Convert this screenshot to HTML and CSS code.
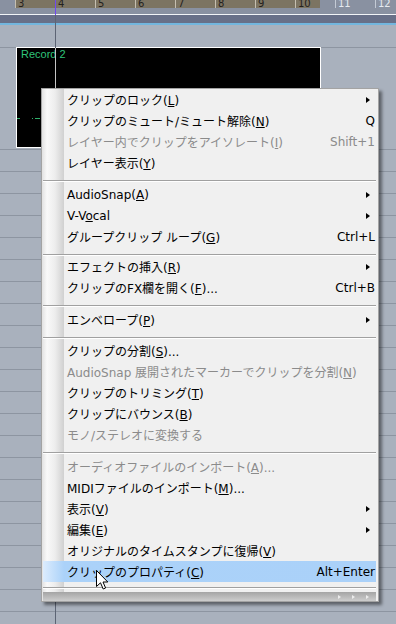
FILE: index.html
```html
<!DOCTYPE html>
<html lang="ja">
<head>
<meta charset="utf-8">
<title>Clip menu</title>
<link rel="stylesheet" href="styles.css">
</head>
<body>
<div class="ruler">
  <div class="tick">3</div><div class="tick">4</div><div class="tick">5</div><div class="tick">6</div>
  <div class="tick">7</div><div class="tick">8</div><div class="tick">9</div><div class="tick">10</div>
  <div class="tick out">11</div><div class="tick out last">12</div>
</div>
<div class="band-grey"></div>
<div class="band-white"></div>
<div class="band-slate"></div>
<div class="band-blue"></div>
<div class="lane-head"></div>
<div class="lane-clip">
  <div class="clip">
    <div class="clip-name">Record 2</div>
    <div class="wave"><span class="d1"></span><span class="d2"></span><span class="d3"></span></div>
  </div>
</div>
<div class="lanes"></div>
<div class="nowline"></div>

<div class="menu">
  <div class="item"><span class="lbl">クリップのロック(<u>L</u>)</span><span class="sub"></span></div>
  <div class="item"><span class="lbl">クリップのミュート/ミュート解除(<u>N</u>)</span><span class="key">Q</span></div>
  <div class="item dis"><span class="lbl">レイヤー内でクリップをアイソレート(<u>I</u>)</span><span class="key">Shift+1</span></div>
  <div class="item"><span class="lbl">レイヤー表示(<u>Y</u>)</span></div>
  <div class="sep"></div>
  <div class="item"><span class="lbl">AudioSnap(<u>A</u>)</span><span class="sub"></span></div>
  <div class="item"><span class="lbl">V-V<u>o</u>cal</span><span class="sub"></span></div>
  <div class="item"><span class="lbl">グループクリップ ループ(<u>G</u>)</span><span class="key">Ctrl+L</span></div>
  <div class="sep s9"></div>
  <div class="item"><span class="lbl">エフェクトの挿入(<u>R</u>)</span><span class="sub"></span></div>
  <div class="item"><span class="lbl">クリップのFX欄を開く(<u>F</u>)...</span><span class="key">Ctrl+B</span></div>
  <div class="sep"></div>
  <div class="item"><span class="lbl">エンベロープ(<u>P</u>)</span><span class="sub"></span></div>
  <div class="sep s10"></div>
  <div class="item"><span class="lbl">クリップの分割(<u>S</u>)...</span></div>
  <div class="item dis"><span class="lbl">AudioSnap 展開されたマーカーでクリップを分割(<u>N</u>)</span></div>
  <div class="item"><span class="lbl">クリップのトリミング(<u>T</u>)</span></div>
  <div class="item"><span class="lbl">クリップにバウンス(<u>B</u>)</span></div>
  <div class="item dis"><span class="lbl">モノ/ステレオに変換する</span></div>
  <div class="sep"></div>
  <div class="item dis"><span class="lbl">オーディオファイルのインポート(<u>A</u>)...</span></div>
  <div class="item"><span class="lbl">MIDIファイルのインポート(<u>M</u>)...</span></div>
  <div class="item"><span class="lbl">表示(<u>V</u>)</span><span class="sub"></span></div>
  <div class="item"><span class="lbl">編集(<u>E</u>)</span><span class="sub"></span></div>
  <div class="item"><span class="lbl">オリジナルのタイムスタンプに復帰(<u>V</u>)</span></div>
  <div class="item hl"><span class="lbl">クリップのプロパティ(<u>C</u>)</span><span class="key">Alt+Enter</span></div>
  <div class="sep last"></div>
  <div class="bar"><span class="tri"></span><span class="tri"></span><span class="tri"></span></div>
</div>

<svg class="cursor" width="13" height="21" viewBox="0 0 13 21">
  <path d="M0.5 0.5 L0.5 16.5 L4.5 12.8 L7.2 19 L9.6 18 L7 12 L11.8 12 Z" fill="#fff" stroke="#000" stroke-width="1" stroke-linejoin="miter"/>
</svg>
</body>
</html>
```
FILE: styles.css
```css
* { box-sizing: border-box; }
html, body { margin: 0; padding: 0; }
body {
  width: 396px;
  height: 624px;
  overflow: hidden;
  position: relative;
  background: #a9b1bd;
  font-family: "DejaVu Sans", "Noto Sans CJK JP", sans-serif;
}

/* timeline ruler */
.ruler {
  display: flex;
  height: 8px;
  padding-left: 15px;
  overflow: hidden;
  background: linear-gradient(to right, #8991a1 0 16px, #7c7462 16px 320px, #8991a1 320px);
}
.tick {
  flex: 0 0 40px;
  border-left: 1px solid #c6bfb1;
  padding-left: 2px;
  font-size: 10px;
  line-height: 8px;
  color: #24211d;
}
.tick.out { border-left-color: #c3cad5; color: #e6eaf0; }
.tick.last { flex-basis: 21px; }

.band-grey { height: 6px; background: #8991a1; }
.band-white { height: 1px; background: #f2f4f7; }
.band-slate { height: 8px; background: #687088; }
.band-blue { height: 2px; background: #72b6de; }

/* tracks */
.lane-head { height: 22px; }
.lane-clip {
  height: 103px;
  border-top: 1px solid #8d95a1;
  border-bottom: 1px solid #8d95a1;
}
.clip {
  margin: -1px 0 0 16px;
  width: 305px;
  height: 101px;
  background: #000;
  border: 1px solid #fff;
}
.clip-name {
  padding: 1px 0 0 4px;
  font: 11px/11px "Liberation Sans", sans-serif;
  color: #2fc37a;
}
.wave { display: flex; height: 1px; margin-top: 58px; }
.wave span { height: 1px; background: #2fae6a; }
.wave .d1 { width: 3px; }
.wave .d2 { width: 1px; margin-left: 12px; }
.wave .d3 { width: 5px; margin-left: 2px; }

.lanes {
  height: 474px;
  background: repeating-linear-gradient(to bottom, transparent 0 21px, #8d95a1 21px 22px);
}

.nowline {
  position: absolute;
  left: 55px;
  top: 0;
  width: 1px;
  height: 624px;
  background: linear-gradient(to bottom, #7048f0 0 15px, #5c6474 15px 48px, #c4c4c4 48px 147px, #5c6474 147px);
}

/* context menu */
.menu {
  position: absolute;
  left: 41px;
  top: 88px;
  width: 338px;
  border: 1px solid #a3a3a3;
  padding: 0 2px 0 1px;
  background: linear-gradient(to right, #e2e2e2 0, #f9f9f9 5px, #ededed 13px, #d0d0d0 22px, #f0f0f0 22px);
  box-shadow: 3px 3px 3px rgba(0, 0, 0, 0.45);
  font-size: 12px;
  color: #000;
}
.item {
  display: flex;
  align-items: center;
  height: 21px;
  white-space: nowrap;
}
.item .lbl { flex: 1; padding-left: 24px; }
.item .key { padding-right: 1px; }
.item .sub {
  width: 0;
  height: 0;
  border-left: 4px solid #000;
  border-top: 3.5px solid transparent;
  border-bottom: 3.5px solid transparent;
  margin-right: 6px;
}
.item.dis { color: #8b8b8b; }
.item.hl {
  background: linear-gradient(to right, #dcecfd 0, #abd2f9 21px, #aad1f9 100%);
}
u { text-underline-offset: 1px; }

.sep { height: 11px; padding-top: 7px; }
.sep::before {
  content: "";
  display: block;
  border-top: 1px solid #a0a0a0;
  border-bottom: 1px solid #ffffff;
}
.sep.s9 { height: 9px; }
.sep.s10 { height: 10px; }
.sep.last { height: 10px; padding-top: 5px; }

.bar {
  height: 9px;
  display: flex;
  justify-content: flex-end;
  align-items: center;
  gap: 11px;
  padding-right: 7px;
  background: linear-gradient(to bottom, #a4a4a4, #cdcdcd);
}
.bar .tri {
  width: 0;
  height: 0;
  border-left: 3px solid #ececec;
  border-top: 2.5px solid transparent;
  border-bottom: 2.5px solid transparent;
}

.cursor {
  position: absolute;
  left: 96px;
  top: 570px;
}
```
